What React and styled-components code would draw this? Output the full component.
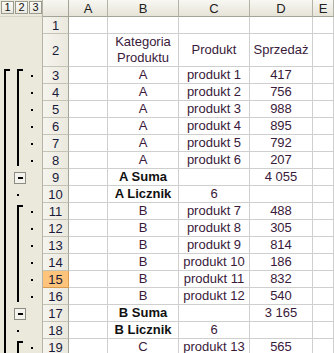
import React from 'react';
import styled, { createGlobalStyle } from 'styled-components';

const Global = createGlobalStyle`
  html, body { margin: 0; padding: 0; background: #fff; overflow: hidden; }
  body { font-family: "Liberation Sans", Arial, sans-serif; }
`;

const Sheet = styled.div`
  display: grid;
  grid-template-columns: 43px 26px 39px 71px 71px 63px 1fr;
  grid-template-rows: 17px 17px 33px;
  grid-auto-rows: 17px;
  width: 334px;
  height: 353px;
  overflow: hidden;
  background: #fff;
`;

const OutlineCell = styled.div`
  background: #ebe9db;
  border-right: 1px solid #b5b3a6;
  box-sizing: border-box;
  display: flex;
  align-items: stretch;
`;

const LevelBar = styled.div`
  display: flex;
  align-items: flex-start;
  padding: 1px 0 0 1px;
  width: 100%;
  background: #ebe9db;
  border-bottom: 1px solid #d6d4c6;
  box-sizing: border-box;
`;

const LevelButton = styled.div`
  width: 13px;
  height: 13px;
  box-sizing: border-box;
  border: 1px solid #9c9b90;
  background: linear-gradient(#fbfbf8, #e9e8e0);
  font-size: 11px;
  line-height: 11px;
  text-align: center;
  color: #111;
  & + & { margin-left: 1px; }
`;

const Slot = styled.div`
  display: flex;
  align-items: stretch;
  width: ${p => p.$w}px;
  flex: ${p => (p.$grow ? 1 : 'none')};
`;

const Bracket = styled.div`
  width: 6px;
  margin-left: 4px;
  box-sizing: border-box;
  border-left: 2px solid #000;
  border-top: ${p => (p.$start ? '2px solid #000' : 'none')};
  margin-top: ${p => (p.$start ? '2px' : '0')};
  margin-bottom: ${p => (p.$end ? '3px' : '0')};
`;

const Dot = styled.div`
  width: 2px;
  height: 2px;
  background: #000;
  align-self: center;
  margin-left: ${p => p.$x}px;
`;

const MinusBox = styled.div`
  width: 13px;
  height: 12px;
  margin-left: 1px;
  align-self: center;
  box-sizing: border-box;
  border: 1px solid #8d8c82;
  background: #f3f2ec;
  display: flex;
  align-items: center;
  justify-content: center;
  &::after {
    content: '';
    width: 5px;
    height: 2px;
    background: #000;
  }
`;

const Corner = styled.div`
  background: linear-gradient(#f7f6f1, #e7e5da);
  border-right: 1px solid #a4a397;
  border-bottom: 1px solid #a4a397;
  box-sizing: border-box;
`;

const ColHeader = styled.div`
  background: linear-gradient(#f8f7f2, #e6e4d8);
  border-right: 1px solid #b3b2a6;
  border-bottom: 1px solid #a4a397;
  box-sizing: border-box;
  font-size: 13px;
  color: #222;
  display: flex;
  align-items: center;
  justify-content: center;
`;

const RowHeader = styled.div`
  background: ${p => (p.$selected ? '#ffc47c' : 'linear-gradient(90deg, #f5f4ee, #ebe9de)')};
  border-right: 1px solid ${p => (p.$selected ? '#d99a4e' : '#a4a397')};
  border-bottom: 1px solid ${p => (p.$selected ? '#d99a4e' : '#c5c3b6')};
  box-sizing: border-box;
  font-size: 13px;
  color: #1a1a3a;
  display: flex;
  align-items: center;
  justify-content: center;
`;

const Cell = styled.div`
  border-right: 1px solid #cfcfcf;
  border-bottom: 1px solid #cfcfcf;
  box-sizing: border-box;
  font-size: 13px;
  line-height: 16px;
  color: ${p => (p.$bold ? '#111' : '#3a1a3a')};
  font-weight: ${p => (p.$bold ? 'bold' : 'normal')};
  display: flex;
  align-items: center;
  justify-content: center;
  text-align: center;
  white-space: nowrap;
`;

const rows = [
  { n: 1, c: ['', '', '', '', ''], o: [null, null, null] },
  { n: 2, c: ['', 'Kategoria\nProduktu', 'Produkt', 'Sprzedaż', ''], o: [null, null, null] },
  { n: 3, c: ['', 'A', 'produkt 1', '417', ''], o: ['start', 'start', 'dot'] },
  { n: 4, c: ['', 'A', 'produkt 2', '756', ''], o: ['line', 'line', 'dot'] },
  { n: 5, c: ['', 'A', 'produkt 3', '988', ''], o: ['line', 'line', 'dot'] },
  { n: 6, c: ['', 'A', 'produkt 4', '895', ''], o: ['line', 'line', 'dot'] },
  { n: 7, c: ['', 'A', 'produkt 5', '792', ''], o: ['line', 'line', 'dot'] },
  { n: 8, c: ['', 'A', 'produkt 6', '207', ''], o: ['line', 'end', 'dot'] },
  { n: 9, c: ['', 'A Suma', '', '4 055', ''], b: [1], o: ['line', 'minus', null] },
  { n: 10, c: ['', 'A Licznik', '6', '', ''], b: [1], o: ['line', 'dot', null] },
  { n: 11, c: ['', 'B', 'produkt 7', '488', ''], o: ['line', 'start', 'dot'] },
  { n: 12, c: ['', 'B', 'produkt 8', '305', ''], o: ['line', 'line', 'dot'] },
  { n: 13, c: ['', 'B', 'produkt 9', '814', ''], o: ['line', 'line', 'dot'] },
  { n: 14, c: ['', 'B', 'produkt 10', '186', ''], o: ['line', 'line', 'dot'] },
  { n: 15, c: ['', 'B', 'produkt 11', '832', ''], o: ['line', 'line', 'dot'], sel: true },
  { n: 16, c: ['', 'B', 'produkt 12', '540', ''], o: ['line', 'end', 'dot'] },
  { n: 17, c: ['', 'B Suma', '', '3 165', ''], b: [1], o: ['line', 'minus', null] },
  { n: 18, c: ['', 'B Licznik', '6', '', ''], b: [1], o: ['line', 'dot', null] },
  { n: 19, c: ['', 'C', 'produkt 13', '565', ''], o: ['line', 'start', 'dot'] },
];

function Mark({ type, dotX }) {
  if (type === 'start') return <Bracket $start />;
  if (type === 'end') return <Bracket $end />;
  if (type === 'line') return <Bracket />;
  if (type === 'dot') return <Dot $x={dotX} />;
  if (type === 'minus') return <MinusBox />;
  return null;
}

function Outline({ marks }) {
  return (
    <OutlineCell>
      <Slot $w={13}><Mark type={marks[0]} dotX={4} /></Slot>
      <Slot $w={13}><Mark type={marks[1]} dotX={4} /></Slot>
      <Slot $grow><Mark type={marks[2]} dotX={5} /></Slot>
    </OutlineCell>
  );
}

export default function App() {
  return (
    <>
      <Global />
      <Sheet>
        <OutlineCell>
          <LevelBar>
            <LevelButton>1</LevelButton>
            <LevelButton>2</LevelButton>
            <LevelButton>3</LevelButton>
          </LevelBar>
        </OutlineCell>
        <Corner />
        {['A', 'B', 'C', 'D', 'E'].map(l => (
          <ColHeader key={l}>{l}</ColHeader>
        ))}
        {rows.map(r => (
          <React.Fragment key={r.n}>
            <Outline marks={r.o} />
            <RowHeader $selected={r.sel}>{r.n}</RowHeader>
            {r.c.map((v, i) => (
              <Cell key={i} $bold={r.b && r.b.includes(i)}>
                {v.includes('\n') ? (
                  <span>
                    {v.split('\n')[0]}
                    <br />
                    {v.split('\n')[1]}
                  </span>
                ) : (
                  v
                )}
              </Cell>
            ))}
          </React.Fragment>
        ))}
      </Sheet>
    </>
  );
}
